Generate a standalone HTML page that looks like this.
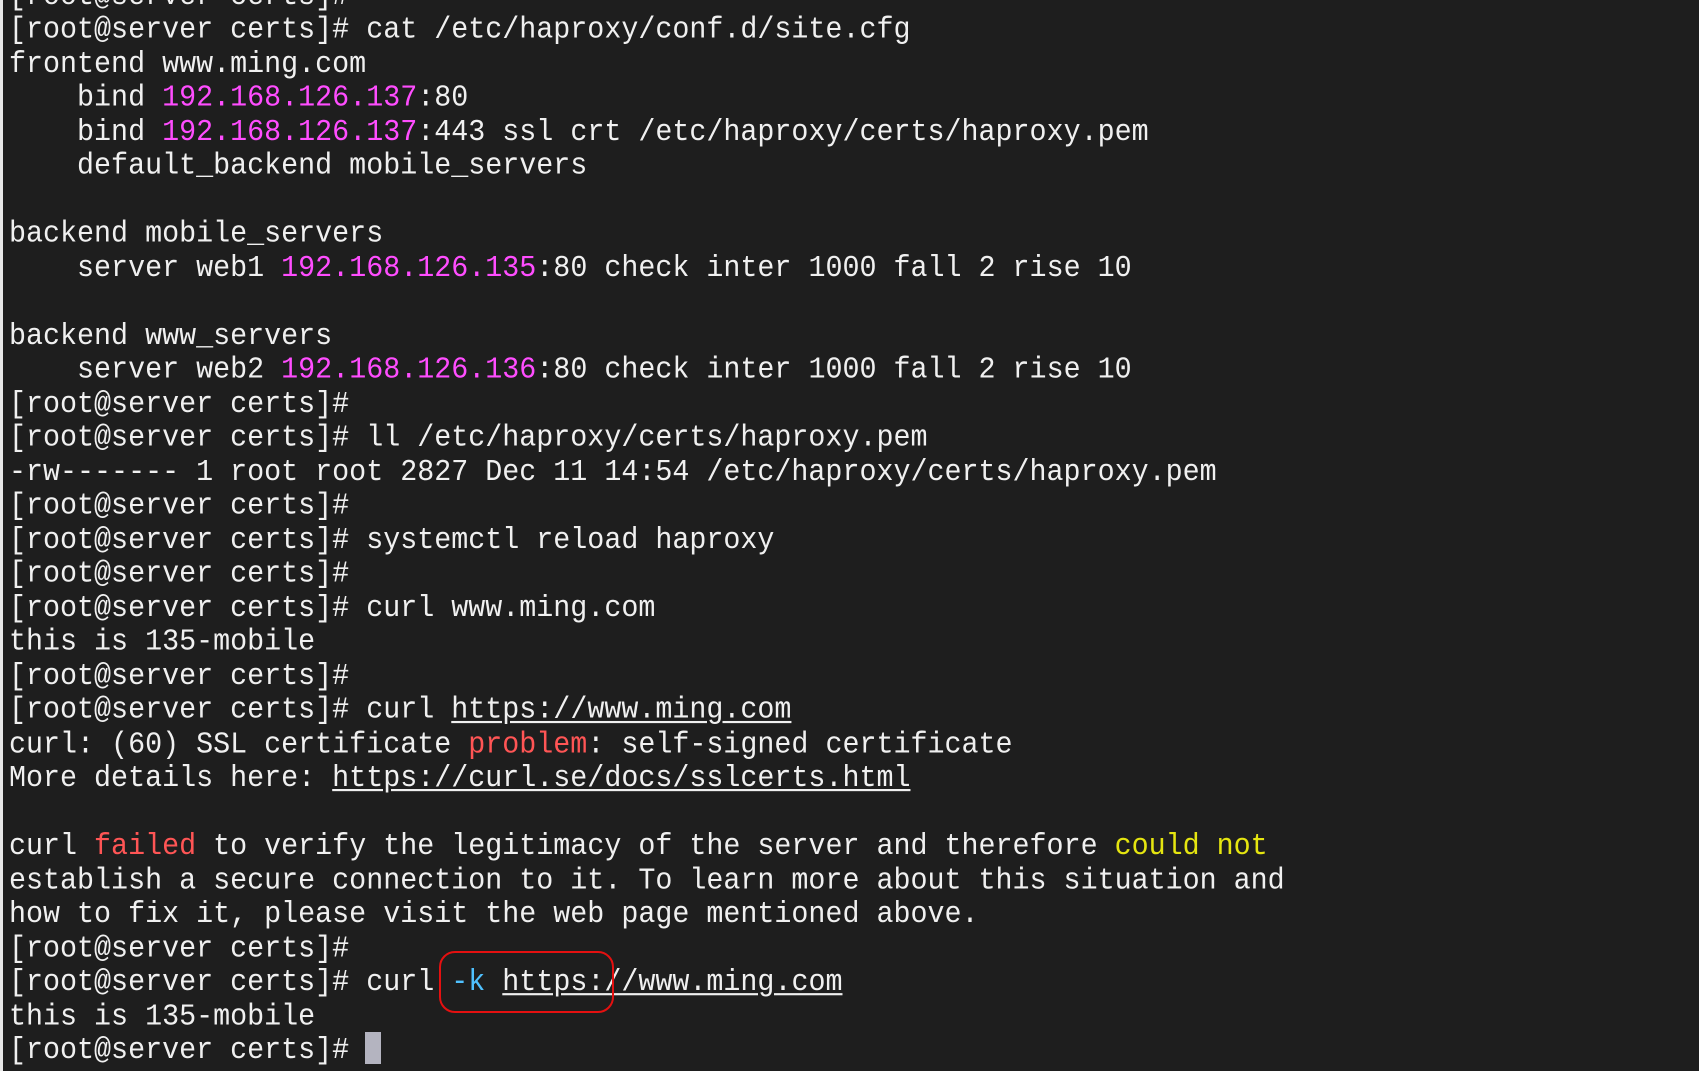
<!DOCTYPE html>
<html><head><meta charset="utf-8"><style>
html,body{margin:0;padding:0;width:1699px;height:1071px;overflow:hidden;background:#1e1e1e;}
.strip{position:absolute;left:0;top:0;width:3px;height:1071px;background:#e8e8e8;}
pre{position:absolute;left:9px;top:-21px;margin:0;font-family:"Liberation Mono",monospace;font-size:28.35px;line-height:31.48px;color:#f0f0f0;transform:scaleY(1.08);transform-origin:0 0;}
.m{color:#ff4dff}.r{color:#ff5555}.y{color:#e5e510}.c{color:#4fc1ff}.u{text-decoration:underline;text-underline-offset:3px}
.ell{position:absolute;left:439px;top:951px;width:171px;height:58px;border:2px solid #e41010;border-radius:16px;}
.cur{position:absolute;left:365px;top:1032px;width:16px;height:32px;background:#b4b4c0;}
</style></head><body>
<div class="strip"></div>
<pre>[root@server certs]#
[root@server certs]# cat /etc/haproxy/conf.d/site.cfg
frontend www.ming.com
    bind <span class="m">192.168.126.137</span>:80
    bind <span class="m">192.168.126.137</span>:443 ssl crt /etc/haproxy/certs/haproxy.pem
    default_backend mobile_servers

backend mobile_servers
    server web1 <span class="m">192.168.126.135</span>:80 check inter 1000 fall 2 rise 10

backend www_servers
    server web2 <span class="m">192.168.126.136</span>:80 check inter 1000 fall 2 rise 10
[root@server certs]#
[root@server certs]# ll /etc/haproxy/certs/haproxy.pem
-rw------- 1 root root 2827 Dec 11 14:54 /etc/haproxy/certs/haproxy.pem
[root@server certs]#
[root@server certs]# systemctl reload haproxy
[root@server certs]#
[root@server certs]# curl www.ming.com
this is 135-mobile
[root@server certs]#
[root@server certs]# curl <span class="u">https://www.ming.com</span>
curl: (60) SSL certificate <span class="r">problem</span>: self-signed certificate
More details here: <span class="u">https://curl.se/docs/sslcerts.html</span>

curl <span class="r">failed</span> to verify the legitimacy of the server and therefore <span class="y">could not</span>
establish a secure connection to it. To learn more about this situation and
how to fix it, please visit the web page mentioned above.
[root@server certs]#
[root@server certs]# curl <span class="c">-k</span> <span class="u">https://www.ming.com</span>
this is 135-mobile
[root@server certs]# </pre>
<div class="ell"></div>
<div class="cur"></div>
</body></html>
